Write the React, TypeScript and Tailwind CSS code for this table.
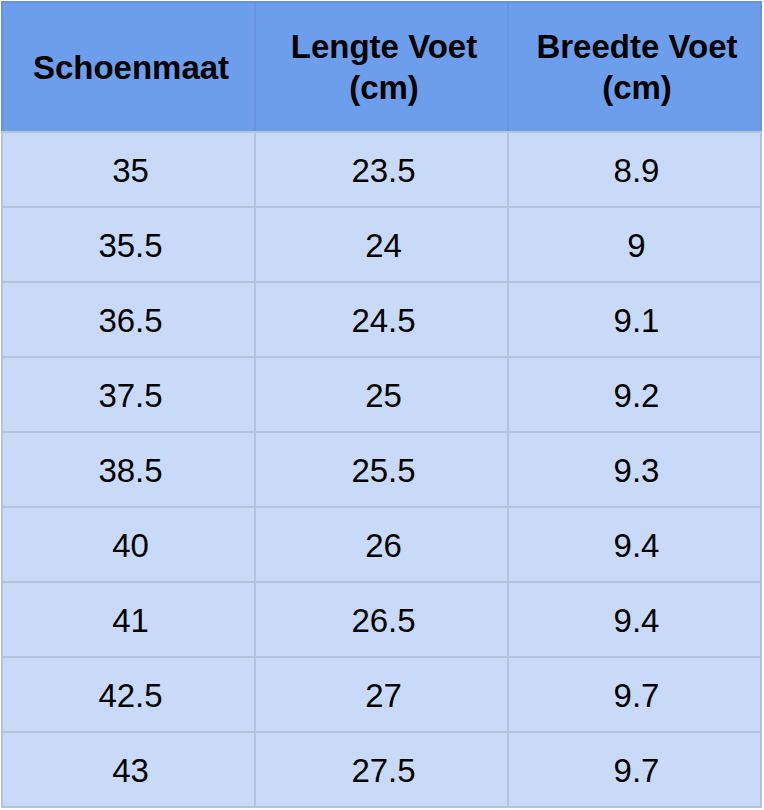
const rows: [string, string, string][] = [
  ['35', '23.5', '8.9'],
  ['35.5', '24', '9'],
  ['36.5', '24.5', '9.1'],
  ['37.5', '25', '9.2'],
  ['38.5', '25.5', '9.3'],
  ['40', '26', '9.4'],
  ['41', '26.5', '9.4'],
  ['42.5', '27', '9.7'],
  ['43', '27.5', '9.7'],
];

const headers = [['Schoenmaat'], ['Lengte Voet', '(cm)'], ['Breedte Voet', '(cm)']];

export default function App() {
  return (
    <div className="min-h-screen bg-white p-px font-['Liberation_Sans',Arial,sans-serif] text-black">
      <table className="w-[761px] table-fixed border-collapse">
        <colgroup>
          <col className="w-[253px]" />
          <col className="w-[253px]" />
          <col className="w-[253px]" />
        </colgroup>
        <thead>
          <tr className="h-[130px]">
            {headers.map((lines, i) => (
              <th
                key={i}
                className="border-2 border-[#6792dd] border-b-[#b3c3de] bg-[#6d9eeb] py-0 pr-0 pl-[5px] text-center align-middle text-[33px] font-bold leading-[41px]"
              >
                {lines.map((l) => (
                  <div key={l}>{l}</div>
                ))}
              </th>
            ))}
          </tr>
        </thead>
        <tbody>
          {rows.map((r, i) => (
            <tr key={i} className="h-[75px]">
              {r.map((v, j) => (
                <td
                  key={j}
                  className="border-2 border-[#b3c3de] bg-[#c9daf8] pt-px pr-0 pb-0 pl-1 text-center align-middle text-[33px] leading-none"
                >
                  {v}
                </td>
              ))}
            </tr>
          ))}
        </tbody>
      </table>
    </div>
  );
}
